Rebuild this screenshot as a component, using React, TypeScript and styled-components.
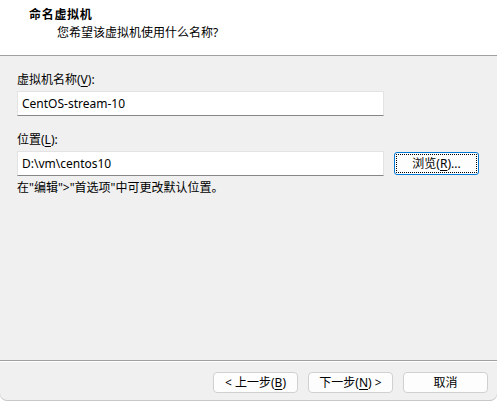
import React from "react";
import styled, { createGlobalStyle } from "styled-components";

const Global = createGlobalStyle`
  html, body { margin: 0; padding: 0; background: #ffffff; }
  body { font-family: "Noto Sans", "Noto Sans CJK SC", sans-serif; font-size: 12px; color: #000; }
`;

const Window = styled.div`
  width: 497px;
  height: 401px;
  display: flex;
  flex-direction: column;
  background: #f0f0f0;
  border-radius: 0 0 7px 7px;
  box-shadow: inset 0 -1px 0 #c8c8c8;
  overflow: hidden;
`;

const Header = styled.div`
  height: 56px;
  box-sizing: border-box;
  background: #ffffff;
  border-bottom: 1px solid #a0a0a0;
  padding: 7px 0 0 29px;
  display: flex;
  flex-direction: column;
  align-items: flex-start;
`;

const Title = styled.div`
  font-weight: bold;
  letter-spacing: 0.7px;
  line-height: 16px;
`;

const Subtitle = styled.div`
  line-height: 16px;
  margin: 2px 0 0 28px;
`;

const Body = styled.div`
  flex: 1;
  padding: 16px 0 0 17px;
  display: flex;
  flex-direction: column;
  align-items: flex-start;
  border-bottom: 1px solid #a0a0a0;
`;

const Label = styled.div<{ $gap?: number }>`
  line-height: 16px;
  margin-top: ${(p) => p.$gap ?? 0}px;
  margin-bottom: 3px;
`;

const Row = styled.div`
  display: flex;
  align-items: center;
  gap: 10px;
`;

const Input = styled.input`
  width: 367px;
  height: 25px;
  box-sizing: border-box;
  border: 1px solid #e3e3e3;
  border-bottom-color: #868686;
  background: #fff;
  padding: 0 0 0 4px;
  font: inherit;
  font-size: 12px;
  color: #000;
  outline: none;
`;

const Button = styled.button<{ $focused?: boolean }>`
  position: relative;
  width: 85px;
  height: ${(p) => (p.$focused ? 23 : 21)}px;
  box-sizing: border-box;
  border: 1px solid ${(p) => (p.$focused ? "#0078d4" : "#d0d0d0")};
  border-radius: ${(p) => (p.$focused ? 3 : 4)}px;
  background: #fdfdfd;
  font: inherit;
  font-size: 12px;
  color: #000;
  padding: 0;
  line-height: 16px;
`;

const FocusRing = styled.span`
  position: absolute;
  inset: 1px;
  border: 1px dotted #000;
  border-radius: 1px;
  pointer-events: none;
`;

const Hint = styled.div`
  line-height: 16px;
  margin-top: 4px;
`;

const Footer = styled.div`
  height: 40px;
  box-sizing: border-box;
  border-top: 1px solid #ffffff;
  padding: 10px 9px 0 0;
  display: flex;
  justify-content: flex-end;
  gap: 10px;
`;

const U = styled.span`
  text-decoration: underline;
  text-underline-offset: 2px;
`;

export default function App() {
  return (
    <>
      <Global />
      <Window>
        <Header>
          <Title>命名虚拟机</Title>
          <Subtitle>您希望该虚拟机使用什么名称?</Subtitle>
        </Header>
        <Body>
          <Label>
            虚拟机名称(<U>V</U>):
          </Label>
          <Input defaultValue="CentOS-stream-10" />
          <Label $gap={16}>
            位置(<U>L</U>):
          </Label>
          <Row>
            <Input defaultValue="D:\vm\centos10" />
            <Button $focused>
              <FocusRing />
              浏览(<U>R</U>)...
            </Button>
          </Row>
          <Hint>在"编辑"&gt;"首选项"中可更改默认位置。</Hint>
        </Body>
        <Footer>
          <Button>
            &lt; 上一步(<U>B</U>)
          </Button>
          <Button>
            下一步(<U>N</U>) &gt;
          </Button>
          <Button>取消</Button>
        </Footer>
      </Window>
    </>
  );
}
